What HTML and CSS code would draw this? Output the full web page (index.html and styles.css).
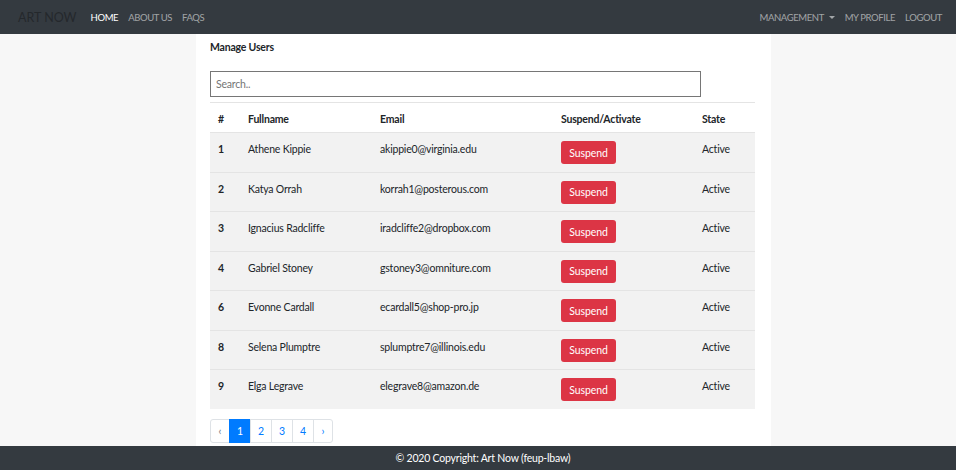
FILE: index.html
```html
<!DOCTYPE html>
<html>
<head>
<meta charset="utf-8">
<link rel="stylesheet" href="styles.css">
</head>
<body>
<nav class="navbar">
  <a class="brand">ART NOW</a>
  <ul class="nav-list nav-left">
    <li class="active">HOME</li>
    <li>ABOUT US</li>
    <li>FAQS</li>
  </ul>
  <ul class="nav-list nav-right">
    <li class="dropdown">MANAGEMENT <span class="caret"></span></li>
    <li>MY PROFILE</li>
    <li>LOGOUT</li>
  </ul>
</nav>
<main class="layout">
  <aside class="side side-left"></aside>
  <section class="content">
    <h1 class="title">Manage Users</h1>
    <input class="search" type="text" placeholder="Search..">
    <table class="users">
      <thead>
        <tr><th class="c-num">#</th><th class="c-name">Fullname</th><th class="c-email">Email</th><th class="c-act">Suspend/Activate</th><th class="c-state">State</th></tr>
      </thead>
      <tbody>
        <tr><th>1</th><td>Athene Kippie</td><td>akippie0@virginia.edu</td><td><button class="btn">Suspend</button></td><td>Active</td></tr>
        <tr><th>2</th><td>Katya Orrah</td><td>korrah1@posterous.com</td><td><button class="btn">Suspend</button></td><td>Active</td></tr>
        <tr><th>3</th><td>Ignacius Radcliffe</td><td>iradcliffe2@dropbox.com</td><td><button class="btn">Suspend</button></td><td>Active</td></tr>
        <tr><th>4</th><td>Gabriel Stoney</td><td>gstoney3@omniture.com</td><td><button class="btn">Suspend</button></td><td>Active</td></tr>
        <tr><th>6</th><td>Evonne Cardall</td><td>ecardall5@shop-pro.jp</td><td><button class="btn">Suspend</button></td><td>Active</td></tr>
        <tr><th>8</th><td>Selena Plumptre</td><td>splumptre7@illinois.edu</td><td><button class="btn">Suspend</button></td><td>Active</td></tr>
        <tr><th>9</th><td>Elga Legrave</td><td>elegrave8@amazon.de</td><td><button class="btn">Suspend</button></td><td>Active</td></tr>
      </tbody>
    </table>
    <ul class="pagination">
      <li class="page prev">&lsaquo;</li>
      <li class="page current">1</li>
      <li class="page">2</li>
      <li class="page">3</li>
      <li class="page">4</li>
      <li class="page next">&rsaquo;</li>
    </ul>
  </section>
  <aside class="side"></aside>
</main>
<footer class="footer">© 2020 Copyright: Art Now (feup-lbaw)</footer>
</body>
</html>
```
FILE: styles.css
```css
* { box-sizing: border-box; }
html, body { margin: 0; padding: 0; }
body {
  width: 956px;
  height: 470px;
  display: flex;
  flex-direction: column;
  font-family: Lato, "Noto Sans", sans-serif;
  font-size: 10.5px;
  letter-spacing: -0.2px;
  color: #212529;
  background: #f7f7f7;
  overflow: hidden;
}
.navbar {
  height: 34px;
  flex: none;
  background: #343a40;
  display: flex;
  align-items: center;
  padding: 0 14px 0 18px;
}
.brand {
  font-size: 12.5px;
  color: #24282c;
  margin-right: 14px;
  letter-spacing: 0;
}
.nav-list {
  list-style: none;
  margin: 0;
  padding: 0;
  display: flex;
  gap: 10px;
  font-size: 9.5px;
  letter-spacing: -0.4px;
  color: rgba(255,255,255,0.55);
}
.nav-left .active { color: #fff; }
.navbar .nav-right { margin-left: auto; }
.caret {
  display: inline-block;
  width: 0; height: 0;
  border-left: 3px solid transparent;
  border-right: 3px solid transparent;
  border-top: 3px solid rgba(255,255,255,0.55);
  vertical-align: 2px;
  margin-left: 3px;
}
.layout {
  flex: 1;
  display: flex;
  min-height: 0;
}
.side { flex: 1; background: #f7f7f7; }
.side-left { flex: none; width: 196px; }
.content {
  width: 575px;
  flex: none;
  background: #fff;
  padding: 5px 16px 0 14px;
}
.title {
  margin: 0;
  font-size: 10.5px;
  font-weight: 700;
  line-height: 16px;
}
.search {
  display: block;
  margin-top: 16px;
  width: 491px;
  height: 26px;
  border: 1px solid #767676;
  border-radius: 0;
  padding: 0 5px;
  font-family: inherit;
  font-size: 10.5px;
  letter-spacing: -0.2px;
  color: #495057;
}
.search::placeholder { color: #757575; }
.users {
  margin-top: 5px;
  width: 545px;
  border-collapse: collapse;
}
.users th, .users td {
  text-align: left;
  vertical-align: top;
  padding: 8px 8px;
  line-height: 16px;
  border-top: 1px solid #e4e4e4;
}
.users thead th {
  font-weight: 700;
  padding: 8px 8px 5px;
  border-bottom: 1px solid #e4e4e4;
}
.users tbody tr { background: #f2f2f2; height: 39.5px; }
.users tbody th { font-weight: 700; }
.c-num { width: 30px; }
.c-name { width: 132px; }
.c-email { width: 181px; }
.c-act { width: 141px; }
.users tbody td:nth-child(4) { padding-top: 8px; padding-bottom: 7px; }
.btn {
  display: block;
  height: 23px;
  width: 55px;
  padding: 0;
  border: none;
  border-radius: 3px;
  background: #dc3545;
  color: #fff;
  font-family: inherit;
  font-size: 10.5px;
  letter-spacing: -0.1px;
}
.pagination {
  list-style: none;
  margin: 10px 0 0;
  padding: 0;
  display: flex;
}
.page {
  height: 24px;
  width: 22px;
  display: flex;
  align-items: center;
  justify-content: center;
  border: 1px solid #dee2e6;
  margin-left: -1px;
  color: #007bff;
  font-size: 10.5px;
}
.prev { margin-left: 0; width: 20px; color: #6c757d; border-radius: 3px 0 0 3px; }
.next { width: 20px; border-radius: 0 3px 3px 0; }
.current { background: #007bff; border-color: #007bff; color: #fff; }
.footer {
  height: 24px;
  flex: none;
  background: #343a40;
  color: #fff;
  text-align: center;
  line-height: 24px;
  font-size: 10.5px;
  padding-left: 10px;
}
```
